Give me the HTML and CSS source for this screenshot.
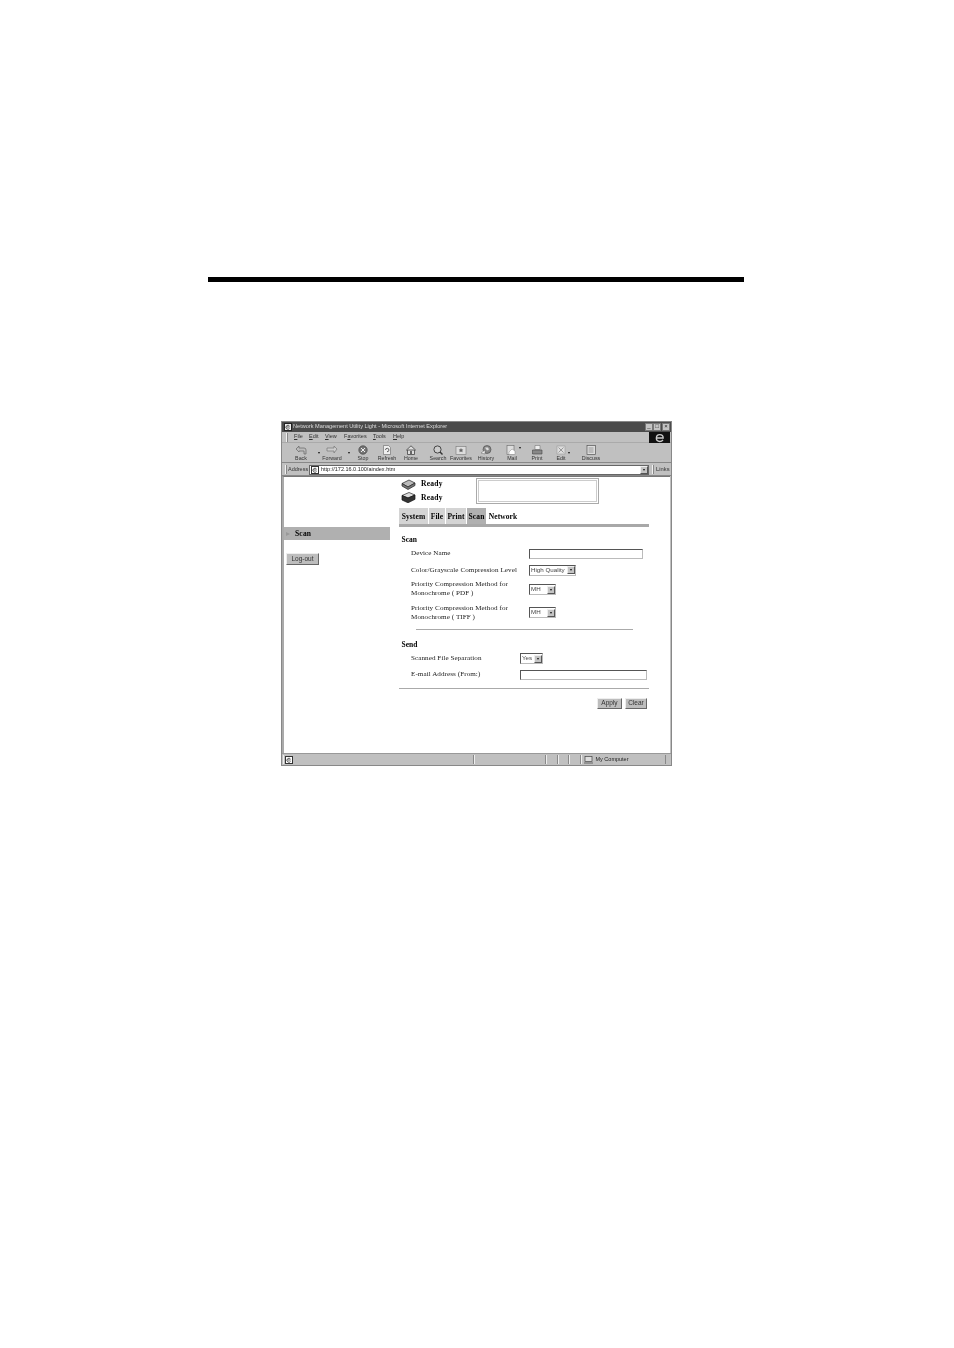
FILE: index.html
```html
<!DOCTYPE html>
<html lang="en">
<head>
<meta charset="utf-8">
<title>Network Management Utility Light</title>
<link rel="stylesheet" href="styles.css">
</head>
<body>
<div class="rule"></div>
<div class="window">
  <div class="titlebar">
    <svg class="t-icon" viewBox="0 0 8 8"><rect x=".5" y=".5" width="7" height="7" fill="#eee" stroke="#222"/><path d="M5.500 3A2 2 0 1 0 5.500 5.500M2.500 4h3" fill="none" stroke="#333" stroke-width=".8"/></svg>
    <span class="t-text">Network Management Utility Light - Microsoft Internet Explorer</span>
    <span class="t-btns"><i class="t-btn">_</i><i class="t-btn">□</i><i class="t-btn">×</i></span>
  </div>
  <div class="menubar">
    <span class="grip"></span>
    <span class="m m-file"><u>F</u>ile</span><span class="m m-edit"><u>E</u>dit</span><span class="m m-view"><u>V</u>iew</span><span class="m m-fav">F<u>a</u>vorites</span><span class="m m-tools"><u>T</u>ools</span><span class="m m-help"><u>H</u>elp</span>
    <span class="logo"><svg viewBox="0 0 20 10"><path d="M7 5.500h6.500C13.500 3.500 12 2.200 10.300 2.200 8.300 2.200 7 3.800 7 5.800S8.300 8.800 10.300 8.800c1.300 0 2.400-.6 3-1.500" fill="none" stroke="#ccc" stroke-width="1.300"/></svg></span>
  </div>
  <div class="toolbar">
    <div class="tool"><svg viewBox="0 0 12 10"><path d="M1 4l3-3v2h5a2 2 0 0 1 2 2v4H9V6H4v1z" fill="#bbb" stroke="#666" stroke-width=".7"/></svg><span>Back</span><i class="drop"></i></div>
    <div class="tool"><svg viewBox="0 0 12 10"><path d="M11 4 8 1v2H1v3h7v2z" fill="#ccc" stroke="#777" stroke-width=".7"/></svg><span>Forward</span><i class="drop"></i></div>
    <div class="tool"><svg viewBox="0 0 12 10"><circle cx="6" cy="5" r="4.200" fill="#777" stroke="#333" stroke-width=".6"/><path d="M4 3l4 4M8 3 4 7" stroke="#eee"/></svg><span>Stop</span></div>
    <div class="tool"><svg viewBox="0 0 12 10"><path d="M2.500.5h5l2 2v7h-7z" fill="#eee" stroke="#666" stroke-width=".6"/><path d="M4.500 5a1.700 1.700 0 1 1 1.500 1.700" fill="none" stroke="#444" stroke-width=".8"/></svg><span>Refresh</span></div>
    <div class="tool"><svg viewBox="0 0 12 10"><path d="M1 5.500 6 .8l5 4.700M2.500 5v4.500h7V5z" fill="#ddd" stroke="#444" stroke-width=".8"/><rect x="5" y="6" width="2" height="3.500" fill="#666"/></svg><span>Home</span></div>
    <div class="tool"><svg viewBox="0 0 12 10"><circle cx="5.500" cy="4.500" r="3.600" fill="#ccc" stroke="#444" stroke-width="1"/><path d="M8 7l2.500 2.500" stroke="#333" stroke-width="1.400"/></svg><span>Search</span></div>
    <div class="tool"><svg viewBox="0 0 12 10"><rect x="1" y="1.500" width="10" height="8" fill="#ddd" stroke="#777" stroke-width=".6"/><path d="M6 3l.8 1.500h1.500L7.200 5.700l.4 1.600L6 6.400l-1.600.9.400-1.600-1.100-1.200h1.500z" fill="#666"/></svg><span>Favorites</span></div>
    <div class="tool"><svg viewBox="0 0 12 10"><circle cx="7" cy="4.500" r="4" fill="#888" stroke="#444" stroke-width=".6"/><path d="M1 8l4-3v4z" fill="#eee" stroke="#666" stroke-width=".5"/><path d="M5 2.500h3l1 2-2 1z" fill="#ddd"/></svg><span>History</span></div>
    <div class="tool"><svg viewBox="0 0 12 10"><rect x="1" y=".5" width="7" height="9" fill="#ddd" stroke="#666" stroke-width=".6"/><path d="M3 7l3-3 3 2v3.500H3z" fill="#fff" stroke="#888" stroke-width=".5"/></svg><span>Mail</span><i class="drop drop-in"></i></div>
    <div class="tool"><svg viewBox="0 0 12 10"><path d="M4 .5h5v4H4z" fill="#eee" stroke="#666" stroke-width=".5"/><path d="M1.500 5h9.500v4H1.500z" fill="#888" stroke="#444" stroke-width=".6"/></svg><span>Print</span></div>
    <div class="tool"><svg viewBox="0 0 12 10"><rect x="2" y="1" width="8" height="8" fill="#ddd" stroke="#999" stroke-width=".6"/><path d="M3.500 2.500l5 5M8.500 2.500l-5 5" stroke="#999"/></svg><span>Edit</span><i class="drop"></i></div>
    <div class="tool"><svg viewBox="0 0 12 10"><rect x="2" y=".5" width="8.500" height="9" fill="#ddd" stroke="#555" stroke-width=".7"/><rect x="3.500" y="2" width="5" height="6" fill="#bbb"/></svg><span>Discuss</span></div>
  </div>
  <div class="addressbar">
    <span class="grip"></span>
    <span class="a-label">Address</span>
    <div class="a-field">
      <svg class="a-icon" viewBox="0 0 8 8"><rect x=".5" y=".5" width="7" height="7" fill="#fff" stroke="#333"/><path d="M5.500 3A2 2 0 1 0 5.500 5.500M2.500 4h3" fill="none" stroke="#333" stroke-width=".8"/></svg>
      <span class="a-url">http://172.16.0.100/aindex.htm</span>
      <span class="arrow-btn"></span>
    </div>
    <span class="grip grip-2"></span>
    <span class="a-links">Links</span>
  </div>
  <div class="viewport">
    <aside class="side">
      <div class="side-head"><i class="side-tri"></i><b>Scan</b></div>
      <button class="btn btn-logout" type="button">Log-out</button>
    </aside>
    <main class="main">
      <div class="status-wrap">
        <div class="ready-list">
          <div class="ready">
            <svg viewBox="0 0 15 11"><path d="M1 4.500 8 1l6 3-7 4z" fill="#bbb" stroke="#222" stroke-width=".7"/><path d="M1 4.500V7l6 3.500 7-4V4L7 8z" fill="#777" stroke="#222" stroke-width=".7"/></svg>
            <b>Ready</b>
          </div>
          <div class="ready">
            <svg viewBox="0 0 15 11"><path d="M1 3.500 8 .5l6 2.500-7 3z" fill="#ddd" stroke="#222" stroke-width=".7"/><path d="M1 3.500v4.500l6 2.800 7-3.500V3L7 6z" fill="#333" stroke="#111" stroke-width=".7"/></svg>
            <b>Ready</b>
          </div>
        </div>
        <div class="msgbox"></div>
      </div>
      <nav class="tabs">
        <span class="tab tab-system">System</span><span class="tab tab-file">File</span><span class="tab tab-print">Print</span><span class="tab tab-scan">Scan</span><span class="tab tab-net">Network</span>
      </nav>
      <section class="scan">
        <h2 class="sec">Scan</h2>
        <div class="row row-name"><label>Device Name</label><span class="input input-name"></span></div>
        <div class="row row-color"><label>Color/Grayscale Compression Level</label><span class="select sel-q">High Quality<i class="arrow-btn"></i></span></div>
        <div class="row row-pdf"><label>Priority Compression Method for<br>Monochrome ( PDF )</label><span class="select sel-mh">MH<i class="arrow-btn"></i></span></div>
        <div class="row row-tiff"><label>Priority Compression Method for<br>Monochrome ( TIFF )</label><span class="select sel-mh">MH<i class="arrow-btn"></i></span></div>
      </section>
      <hr class="hr-short">
      <section class="send">
        <h2 class="sec">Send</h2>
        <div class="row row-sep"><label>Scanned File Separation</label><span class="select sel-yes">Yes<i class="arrow-btn"></i></span></div>
        <div class="row row-mail"><label>E-mail Address (From:)</label><span class="input input-mail"></span></div>
      </section>
      <hr class="hr-long">
      <div class="actions">
        <button class="btn btn-apply" type="button">Apply</button>
        <button class="btn btn-clear" type="button">Clear</button>
      </div>
    </main>
  </div>
  <div class="statusbar">
    <span class="seg seg-1"><svg class="a-icon" viewBox="0 0 8 8"><rect x=".5" y=".5" width="7" height="7" fill="#fff" stroke="#333"/><path d="M5.500 3A2 2 0 1 0 5.500 5.500M2.500 4h3" fill="none" stroke="#333" stroke-width=".8"/></svg></span>
    <span class="seg seg-2"></span><span class="seg seg-3"></span><span class="seg seg-3"></span><span class="seg seg-3"></span>
    <span class="seg seg-last"><svg class="pc" viewBox="0 0 9 8"><rect x="1" y=".5" width="7" height="5" fill="#ddd" stroke="#444" stroke-width=".7"/><path d="M0 6.500h9v1H0z" fill="#666"/></svg>My Computer</span>
  </div>
</div>
</body>
</html>
```

FILE: styles.css
```css
* { box-sizing: border-box; }
html, body { margin: 0; background: #fff; }
body { width: 954px; height: 1348px; padding-top: 277px; overflow: hidden; }
.rule { width: 536px; height: 5px; margin-left: 208px; background: #000; }
.window {
  width: 391px; height: 345px; margin: 139px 0 0 281px;
  background: #c0c0c0; border: 1px solid #888; display: flex; flex-direction: column;
  font: 5.500px/1 "Liberation Sans", sans-serif; color: #333; filter: blur(.4px);
}
.titlebar { height: 10px; flex: none; background: #4b4b4b; color: #ddd; display: flex; align-items: center; padding: 0 1px 0 2px; font-size: 5.600px; }
.t-icon { width: 8px; height: 8px; margin-right: 1px; }
.t-btns { margin-left: auto; display: flex; }
.t-btn { width: 8px; height: 8px; background: #c4c4c4; border: 1px solid #777; color: #222; font-style: normal; font-size: 6px; line-height: 5px; text-align: center; }
.t-btns .t-btn:last-child { margin-left: 1px; }
.menubar { height: 11px; flex: none; display: flex; align-items: center; padding-left: 4px; position: relative; border-bottom: 1px solid #aaa; }
.grip { width: 2px; height: 9px; border-left: 1px solid #f0f0f0; border-right: 1px solid #888; flex: none; }
.m { display: block; }
.m-file { margin-left: 6px; width: 15px; }
.m-edit { width: 16px; }
.m-view { width: 19px; }
.m-fav { width: 29px; }
.m-tools { width: 20px; }
.logo { position: absolute; right: 1px; top: 0; width: 21px; height: 11px; background: #111; }
.logo svg { display: block; width: 100%; height: 100%; }
.toolbar { height: 20px; flex: none; display: grid; grid-template-columns: 32px 30px 26px 22px 26px 28px 18px 32px 20px 30px 18px 42px; padding-left: 6px; border-bottom: 1px solid #888; }
.tool { position: relative; display: flex; flex-direction: column; align-items: center; white-space: nowrap; padding: 2px 6px 0 0; font-size: 5.300px; }
.tool:nth-child(n+3) { padding-right: 0; }
.tool svg { width: 12px; height: 10px; flex: none; margin-bottom: 1px; }
.drop { position: absolute; right: 0; top: 9px; width: 0; height: 0; border: 1.500px solid transparent; border-top: 2px solid #111; }
.drop-in { right: 1px; top: 4px; }
.addressbar { height: 13px; flex: none; display: flex; align-items: center; padding: 1px 1px 0 3px; border-bottom: 1px solid #888; }
.a-label { margin-left: 1px; width: 21px; }
.a-field { width: 340px; height: 10px; background: #fff; border: 1px solid #666; display: flex; align-items: center; padding-left: 1px; color: #222; }
.a-icon { width: 8px; height: 8px; flex: none; }
.a-url { margin-left: 2px; }
.a-field .arrow-btn { margin-left: auto; }
.arrow-btn { display: block; position: relative; width: 8px; height: 8px; background: #c4c4c4; border: 1px solid #555; border-top-color: #eee; border-left-color: #eee; flex: none; }
.arrow-btn::after { content: ""; position: absolute; left: 1.500px; top: 2px; border: 1.500px solid transparent; border-top: 2px solid #111; }
.grip-2 { margin-left: 3px; }
.a-links { margin-left: 2px; font-size: 5.800px; }
.viewport { flex: 1; min-height: 0; margin-right: 1px; background: #fff; border-top: 1px solid #777; border-left: 2px solid #aaa; display: grid; grid-template-columns: 115px 1fr; font: 7.100px/9px "Liberation Serif", serif; color: #222; }
.side { padding-top: 50px; }
.side-head { width: 106px; height: 13px; background: #b0b0b0; display: flex; align-items: center; color: #000; }
.side-head b { font-size: 7.500px; letter-spacing: .2px; }
.side-tri { margin: 0 5px 0 2px; border: 2.500px solid transparent; border-left: 4px solid #999; border-right: 0; }
.btn { display: block; padding: 0; font: 6.500px/1 "Liberation Sans", sans-serif; color: #333; background: #bdbdbd; border: 1px solid #666; border-top-color: #eee; border-left-color: #eee; }
.btn-logout { width: 33px; height: 12px; margin: 13px 0 0 2px; }
.main { padding-top: 1px; min-width: 0; }
.status-wrap { display: flex; height: 27px; }
.ready-list { width: 77px; padding-left: 2px; }
.ready { display: flex; align-items: center; height: 13px; color: #000; }
.ready svg { width: 15px; height: 11px; margin-right: 5px; flex: none; }
.ready b { font-size: 7.600px; letter-spacing: .2px; position: relative; top: -1px; }
.ready + .ready b { top: 0; }
.msgbox { width: 123px; height: 26px; border: 1px solid #aaa; outline: 1px solid #ccc; outline-offset: -3px; }
.tabs { display: flex; height: 16px; margin-top: 3px; font-weight: bold; color: #000; font-size: 7.500px; letter-spacing: .1px; }
.tab { display: flex; align-items: center; justify-content: center; padding-top: 1px; background: #d4d4d4; }
.tab-system { width: 29px; margin-right: 1px; }
.tab-file { width: 16px; margin-right: 1px; }
.tab-print { width: 20px; margin-right: 1px; }
.tab-scan { width: 19px; background: #b0b0b0; }
.tab-net { width: 34px; background: #fff; }
.scan { border-top: 3px solid #a8a8a8; width: 250px; padding-top: 8px; }
.sec { margin: 0 0 0 2.500px; font-size: 7.500px; line-height: 9px; font-weight: bold; color: #000; }
.row { display: flex; letter-spacing: .07px; }
.row label { display: block; }
.scan .row, .send .row { padding-left: 12px; }
.scan .row label { width: 118px; }
.send .row label { width: 109px; }
.row-name { margin-top: 2px; height: 15px; align-items: center; }
.row-color { height: 14px; align-items: center; margin-top: 2px; }
.row-pdf { margin-top: 3px; height: 23px; }
.row-tiff { margin-top: 1px; height: 22px; }
.row-pdf .select { margin-top: 4px; }
.row-tiff .select { margin-top: 3px; }
.input { display: block; height: 10px; background: #fff; border: 1px solid #bbb; border-top-color: #555; border-left-color: #555; }
.input-name { width: 114px; }
.input-mail { width: 127px; }
.select { display: flex; align-items: center; height: 11px; padding-left: 1px; border: 1px solid #bbb; border-top-color: #555; border-left-color: #555; font: 6.200px/1 "Liberation Sans", sans-serif; letter-spacing: 0; color: #444; background: #fff; white-space: nowrap; }
.select .arrow-btn { margin-left: auto; }
.sel-q { width: 47px; }
.sel-mh { width: 27px; }
.sel-yes { width: 23px; }
.hr-short { height: 1px; border: 0; margin: 3px 0 0 17px; width: 217px; background: #aaa; }
.send { padding-top: 10px; }
.send .sec { margin-bottom: 2px; }
.row-sep { height: 15px; align-items: center; }
.row-mail { height: 15px; align-items: center; margin-top: 1px; }
.hr-long { height: 1px; border: 0; margin: 6px 0 0; width: 250px; background: #aaa; }
.actions { display: flex; justify-content: flex-end; gap: 3px; width: 248px; margin-top: 9px; }
.btn-apply { width: 25px; height: 11px; }
.btn-clear { width: 22px; height: 11px; }
.statusbar { height: 12px; flex: none; display: flex; border-top: 1px solid #999; padding: 1px 0 1px 1px; }
.seg { display: flex; align-items: center; border-left: 1px solid #eee; border-right: 1px solid #888; height: 100%; }
.seg-1 { width: 191px; padding-left: 1px; }
.seg-2 { width: 72px; }
.seg-3 { width: 11.500px; }
.seg-last { width: 85px; padding-left: 1px; color: #222; }
.pc { width: 9px; height: 8px; margin-right: 3px; margin-left: 1px; }
```
